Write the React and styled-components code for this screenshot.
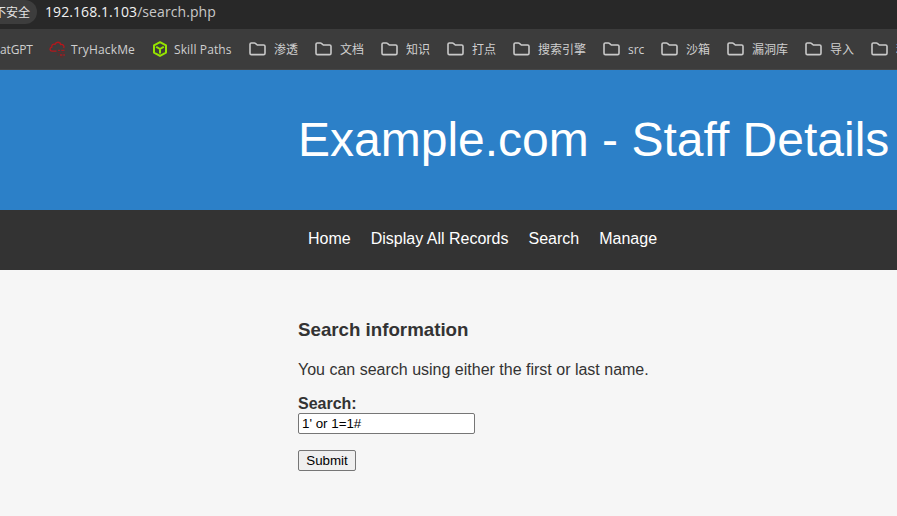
import React from "react";
import styled, { createGlobalStyle } from "styled-components";

const Global = createGlobalStyle`
  * { box-sizing: border-box; }
  html, body { margin: 0; padding: 0; }
  body {
    background: #f6f6f6;
    font-family: "Liberation Sans", Arial, sans-serif;
    overflow: hidden;
  }
`;

const Screen = styled.div`
  width: 897px;
  height: 516px;
  overflow: hidden;
  background: #f6f6f6;
`;

const AddressBar = styled.div`
  height: 29px;
  display: flex;
  align-items: flex-start;
  background: #282828;
  overflow: hidden;
  font-family: "Open Sans", "Noto Sans CJK SC", sans-serif;
`;

const SecurityChip = styled.div`
  flex: none;
  width: 37px;
  height: 24px;
  padding: 1px 7px 0 0;
  display: flex;
  align-items: center;
  justify-content: flex-end;
  overflow: hidden;
  border-radius: 0 12px 12px 0;
  background: #3d3d3d;
  color: #e4e4e4;
  font-size: 12px;
  line-height: 23px;
  white-space: nowrap;
`;

const Url = styled.div`
  margin-left: 8px;
  color: #c8c8c8;
  font-size: 14px;
  line-height: 24px;
  letter-spacing: 0.08px;
  white-space: nowrap;
`;

const Host = styled.span`
  color: #f2f2f2;
`;

const BookmarkBar = styled.div`
  height: 41px;
  display: flex;
  align-items: center;
  background: #3c3c3c;
  border-bottom: 1px solid #464646;
  overflow: hidden;
  color: #cfcfcf;
  font-family: "Open Sans", "Noto Sans CJK SC", sans-serif;
  font-size: 12px;
`;

const Bookmark = styled.div`
  flex: none;
  width: ${(p) => p.$width}px;
  height: 18px;
  display: flex;
  align-items: center;
  gap: ${(p) => p.$gap || 8}px;
  white-space: nowrap;
  line-height: 18px;
  svg { flex: none; }
`;

const BookmarkLabel = styled.span`
  padding-top: 2px;
  letter-spacing: ${(p) => p.$tracking || 0}px;
`;

const Header = styled.header`
  height: 140px;
  padding: 42px 0 0 298px;
  background: #2c80c8;
`;

const Title = styled.h1`
  margin: 0;
  color: #fff;
  font-size: 48px;
  font-weight: 400;
  line-height: 56px;
  white-space: nowrap;
`;

const Nav = styled.nav`
  height: 60px;
  padding: 0 0 3px 308px;
  display: flex;
  align-items: center;
  gap: 20px;
  background: #333;
`;

const NavLink = styled.a`
  color: #fff;
  font-size: 16px;
  line-height: 20px;
  text-decoration: none;
`;

const Main = styled.main`
  padding: 49px 0 0 298px;
  color: #333;
`;

const Heading = styled.h3`
  margin: 0;
  font-size: 18.72px;
  line-height: 21px;
`;

const Text = styled.p`
  margin: 21px 0 0;
  font-size: 16px;
  line-height: 18px;
`;

const Form = styled.form`
  display: flex;
  flex-direction: column;
  align-items: flex-start;
  margin-top: 16px;
`;

const Label = styled.label`
  font-size: 16px;
  font-weight: 700;
  line-height: 18px;
`;

const Input = styled.input`
  width: 177px;
  height: 21px;
  margin: 0;
  padding: 1px 3px;
  border: 1px solid #767676;
  border-radius: 2px;
  background: #fff;
  color: #000;
  font: 13.333px "Liberation Sans", Arial, sans-serif;
`;

const Submit = styled.button`
  width: 58px;
  height: 21px;
  margin: 16px 0 0;
  padding: 0;
  border: 1px solid #767676;
  border-radius: 2px;
  background: #efefef;
  color: #000;
  font: 13.333px "Liberation Sans", Arial, sans-serif;
`;

const FolderIcon = () => (
  <svg width="17" height="14" viewBox="0 0 17 14" fill="none" stroke="#c9c9c9" strokeWidth="1.6" strokeLinejoin="round">
    <path d="M1 2.3Q1 1 2.3 1H5.4Q6 1 6.4 1.4L8.3 3H14.6Q16 3 16 4.3V11.2Q16 12.6 14.6 12.6H2.4Q1 12.6 1 11.2Z" />
  </svg>
);

const CloudIcon = () => (
  <svg width="17" height="17" viewBox="0 0 17 17" fill="none">
    <path d="M7.5 10.2H3.2C.5 10.2.2 6.8 2.8 6.2C2.4 3.8 4.4 2.6 6 3.4C7 .4 11.2.6 11.6 3.5C14.2 3.1 15.8 5.3 14.6 7.2" stroke="#b5171c" strokeWidth="1.3" />
    <path d="M9 9.3H11M12.2 9.3H15.5M11 14H13.4M14.2 14H16" stroke="#a01c20" strokeWidth="1.3" />
    <path d="M8.5 11.6H11.6M12.8 11.6H15.6M8 14H10M11 16H14.5" stroke="#63292b" strokeWidth="1.2" />
  </svg>
);

const CubeIcon = () => (
  <svg width="16" height="16" viewBox="0 0 16 16" fill="none" stroke="#95e300" strokeWidth="2" strokeLinejoin="round" strokeLinecap="round">
    <path d="M8 1.2L14 4.4V11.6L8 14.9L2 11.6V4.4ZM4.8 6.2L8 8L11.2 6.2M8 8V11.8" />
  </svg>
);

const folders = [
  ["渗透", 66], ["文档", 66], ["知识", 66], ["打点", 66], ["搜索引擎", 90],
  ["src", 58], ["沙箱", 66], ["漏洞库", 78], ["导入", 66], ["利用", 66],
];

export default function App() {
  return (
    <Screen>
      <Global />
      <AddressBar>
        <SecurityChip>不安全</SecurityChip>
        <Url><Host>192.168.1.103</Host>/search.php</Url>
      </AddressBar>
      <BookmarkBar>
        <Bookmark $width={49}><BookmarkLabel $tracking={-0.15}>atGPT</BookmarkLabel></Bookmark>
        <Bookmark $width={103} $gap={5}><CloudIcon /><BookmarkLabel $tracking={0.15}>TryHackMe</BookmarkLabel></Bookmark>
        <Bookmark $width={97} $gap={6}><CubeIcon /><BookmarkLabel $tracking={0.12}>Skill Paths</BookmarkLabel></Bookmark>
        {folders.map(([name, width]) => (
          <Bookmark key={name} $width={width}><FolderIcon /><BookmarkLabel>{name}</BookmarkLabel></Bookmark>
        ))}
      </BookmarkBar>
      <Header><Title>Example.com - Staff Details</Title></Header>
      <Nav>
        <NavLink>Home</NavLink>
        <NavLink>Display All Records</NavLink>
        <NavLink>Search</NavLink>
        <NavLink>Manage</NavLink>
      </Nav>
      <Main>
        <Heading>Search information</Heading>
        <Text>You can search using either the first or last name.</Text>
        <Form>
          <Label htmlFor="term">Search:</Label>
          <Input id="term" defaultValue="1' or 1=1#" />
          <Submit type="button">Submit</Submit>
        </Form>
      </Main>
    </Screen>
  );
}
